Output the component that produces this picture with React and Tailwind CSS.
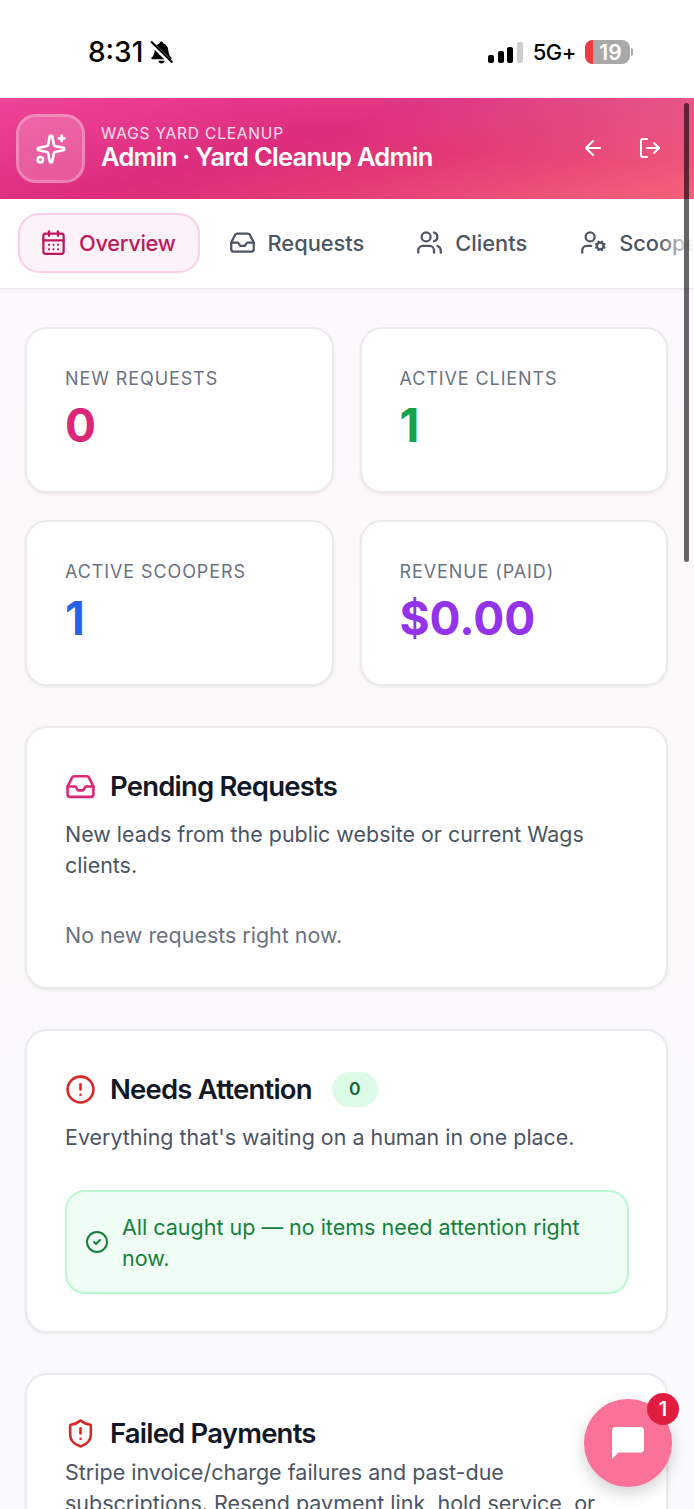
import React from "react";
import { Sparkles, ArrowLeft, LogOut, CalendarDays, Inbox, Users, UserCog, CircleAlert, ShieldAlert, CircleCheck } from "lucide-react";

function Stat({ label, value, color }) {
  return (
    <div className="h-[166px] rounded-[22px] border-2 border-[#ebebee] bg-white px-[38px] pt-[37px] shadow-[0_1px_3px_rgba(0,0,0,0.08)]">
      <div className="text-[18px] leading-[26px] tracking-[0.9px] text-[#6b7280]">{label}</div>
      <div className={`mt-[3px] text-[46px] font-bold leading-[60px] ${color}`}>{value}</div>
    </div>
  );
}

function Card({ children, className = "" }) {
  return (
    <div className={`shrink-0 rounded-[22px] border-2 border-[#ebebee] bg-white pl-[38px] pr-[37px] shadow-[0_1px_3px_rgba(0,0,0,0.08)] ${className}`}>
      {children}
    </div>
  );
}

function Title({ children }) {
  return <h2 className="text-[27.500px] font-semibold leading-[44px] tracking-[-0.8px] text-[#111827]">{children}</h2>;
}

function Tab({ icon: Icon, label, active, className = "" }) {
  return (
    <div className={`flex h-[60px] shrink-0 items-center gap-[12px] rounded-[21px] border-2 pl-[20px] text-[21.800px] font-medium ${active ? "border-[#fbcfe8] bg-[#fdf2f8] pr-[22px] text-[#be185d]" : "border-transparent pr-[21px] text-[#4b5563]"} ${className}`}>
      <Icon size={27} strokeWidth={2} />
      <span className="pt-[1px]">{label}</span>
    </div>
  );
}

export default function App() {
  return (
    <div className="relative h-[1509px] w-[694px] overflow-hidden bg-white font-['Inter',sans-serif]">
      {/* status bar */}
      <div className="flex h-[98px] items-start justify-between pl-[88px] pr-[61px] pt-[35px] text-black">
        <div className="flex items-center gap-[6px]">
          <span className="text-[28px] font-medium leading-[34px]">8:31</span>
          <svg width="25" height="25" viewBox="0 0 24 24" fill="currentColor">
            <path d="M12 1.500c-.9 0-1.500.6-1.600 1.500C7.400 3.700 5.800 6.300 5.500 9.500c-.3 3.500-1 5.500-3 7.300-.6.600-.3 1.700.7 1.700h17.600c1 0 1.300-1.100.7-1.700-2-1.800-2.700-3.800-3-7.300-.3-3.200-1.900-5.800-4.900-6.500-.1-.9-.7-1.500-1.600-1.500z" />
            <path d="M9 20h6c-.2 1.500-1.400 2.500-3 2.500S9.200 21.500 9 20z" />
            <path d="M1.500 2.500 22 22.500" stroke="#fff" strokeWidth="4.500" />
            <path d="M2 1.500 22.500 21.500" stroke="#000" strokeWidth="2" />
          </svg>
        </div>
        <div className="flex items-center">
          <svg width="36" height="24" viewBox="0 0 36 24" className="mt-[1px]">
            <rect x="1" y="14" width="6" height="8" rx="2" fill="#000" />
            <rect x="11" y="10" width="6" height="12" rx="2" fill="#000" />
            <rect x="20" y="6" width="6" height="16" rx="2" fill="#000" />
            <rect x="30" y="1" width="6" height="21" rx="2" fill="#cfcfcf" />
          </svg>
          <span className="ml-[10px] text-[22px] font-medium leading-[34px] tracking-[-0.5px]">5G+</span>
          <div className="relative ml-[9px] flex h-[24px] w-[45px] items-center justify-center overflow-hidden rounded-[8px] bg-[#a9a9a9] pl-[6px]">
            <div className="absolute inset-y-0 left-0 w-[8px] bg-[#f0383f]" />
            <span className="relative text-[21px] font-semibold leading-none text-white">19</span>
          </div>
          <div className="ml-[1px] h-[8px] w-[2px] rounded-r-full bg-[#a9a9a9]" />
        </div>
      </div>

      {/* header */}
      <div className="flex h-[101px] items-center bg-[radial-gradient(ellipse_at_100%_0%,rgba(255,255,255,0.13),transparent_45%),linear-gradient(165deg,#ee4598_0%,#dd2c7d_42%,#e23a76_62%,#f6627a_100%)] pl-[16px] pr-[32px] text-white">
        <div className="flex h-[69px] w-[69px] items-center justify-center rounded-[20px] border-[3px] border-white/25 bg-white/20">
          <Sparkles size={32} strokeWidth={2} />
        </div>
        <div className="ml-[16px] flex-1">
          <div className="text-[15.500px] leading-[20px] tracking-[0.8px] text-white/85">WAGS YARD CLEANUP</div>
          <div className="-mt-[3px] text-[25.500px] font-semibold leading-[32px] tracking-[-0.75px]">Admin · Yard Cleanup Admin</div>
        </div>
        <ArrowLeft size={24} strokeWidth={2} className="mb-[2px] mr-[33px]" />
        <LogOut size={24} strokeWidth={2} className="mb-[2px]" />
      </div>

      {/* tabs */}
      <div className="relative z-10 flex h-[90px] items-center gap-[7px] overflow-hidden border-b border-[#e5e7eb] bg-white pb-[2px] pl-[18px] shadow-[0_1px_3px_rgba(0,0,0,0.06)]">
        <Tab icon={CalendarDays} label="Overview" active className="tracking-[-0.3px]" />
        <Tab icon={Inbox} label="Requests" />
        <Tab icon={Users} label="Clients" />
        <Tab icon={UserCog} label="Scoopers" className="ml-[1px]" />
        <div className="absolute inset-y-0 right-0 w-[36px] bg-gradient-to-r from-white/0 to-white" />
      </div>

      {/* content */}
      <div className="flex h-[1221px] flex-col gap-[40px] bg-[linear-gradient(180deg,#fdf8fb_0%,#fcf9fb_40%,#fafafc_100%)] pl-[25px] pr-[26px] pt-[38px]">
        <div className="grid shrink-0 grid-cols-2 gap-x-[26px] gap-y-[27px]">
          <Stat label="NEW REQUESTS" value="0" color="text-[#db2777]" />
          <Stat label="ACTIVE CLIENTS" value="1" color="text-[#16a34a]" />
          <Stat label="ACTIVE SCOOPERS" value="1" color="text-[#2563eb]" />
          <Stat label="REVENUE (PAID)" value="$0.00" color="text-[#9333ea]" />
        </div>

        <Card className="h-[263px] pt-[36px]">
          <div className="flex items-center gap-[14px]">
            <Inbox size={31} strokeWidth={2} className="text-[#db2777]" />
            <Title>Pending Requests</Title>
          </div>
          <p className="mt-[11px] text-[21.450px] leading-[31px] text-[#4b5563]">New leads from the public website or current Wags clients.</p>
          <p className="mt-[39px] text-[21.450px] leading-[31px] text-[#6b7280]">No new requests right now.</p>
        </Card>

        <Card className="h-[304px] pt-[36px]">
          <div className="flex items-center gap-[14px]">
            <CircleAlert size={31} strokeWidth={2} className="text-[#dc2626]" />
            <Title>Needs Attention</Title>
            <span className="ml-[6px] flex h-[35px] w-[46px] items-center justify-center rounded-full bg-[#dcfce7] text-[17.500px] font-semibold text-[#166534]">0</span>
          </div>
          <p className="mt-[11px] text-[21.450px] leading-[31px] text-[#4b5563]">Everything that's waiting on a human in one place.</p>
          <div className="mt-[37px] flex h-[104px] items-center gap-[13px] rounded-[20px] border-2 border-[#bbf7d0] bg-[#f0fdf4] pl-[18px] pr-[30px] text-[21.500px] leading-[31px] text-[#15803d]">
            <CircleCheck size={24} strokeWidth={2} className="shrink-0 text-[#15803d]" />
            <span className="pt-[1px]">All caught up — no items need attention right now.</span>
          </div>
        </Card>

        <Card className="h-[200px] pt-[36px]">
          <div className="flex items-center gap-[14px]">
            <ShieldAlert size={31} strokeWidth={2} className="text-[#dc2626]" />
            <Title>Failed Payments</Title>
          </div>
          <p className="mt-[2px] text-[21.500px] leading-[31px] text-[#4b5563]">Stripe invoice/charge failures and past-due subscriptions. Resend payment link, hold service, or</p>
        </Card>
      </div>

      {/* scrollbar overlay */}
      <div className="absolute left-[684px] top-[103px] z-20 h-[459px] w-[5px] rounded-full bg-black/60" />

      {/* chat button */}
      <div className="absolute left-[584px] top-[1399px] flex h-[88px] w-[88px] items-center justify-center rounded-full bg-[#fb7299] shadow-[0_6px_16px_rgba(0,0,0,0.18)]">
        <svg width="32" height="32" viewBox="2 2 20 20" fill="#fff">
          <path d="M20 2H4c-1.100 0-2 .9-2 2v18l4-4h14c1.100 0 2-.9 2-2V4c0-1.100-.9-2-2-2z" />
        </svg>
      </div>
      <div className="absolute left-[647px] top-[1393px] flex h-[32px] w-[32px] items-center justify-center rounded-full bg-[#e11d3f] text-[20px] font-semibold text-white">1</div>
    </div>
  );
}
